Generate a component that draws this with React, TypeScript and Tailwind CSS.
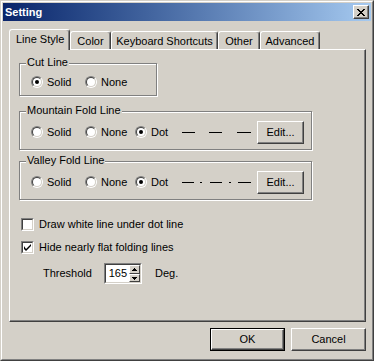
import React from "react";

const Radio = ({ checked }: { checked?: boolean }) => (
  <span className="w-[12px] h-[12px] rounded-full border border-t-[#808080] border-l-[#808080] border-b-white border-r-white shrink-0 flex">
    <span className="flex-1 rounded-full border border-t-[#404040] border-l-[#404040] border-b-[#d4d0c8] border-r-[#d4d0c8] bg-white flex items-center justify-center">
      {checked && <span className="w-[4px] h-[4px] rounded-full bg-black" />}
    </span>
  </span>
);

const RadioOpt = ({ label, checked, w }: { label: string; checked?: boolean; w: string }) => (
  <div className={`flex items-center gap-[4px] ${w}`}>
    <Radio checked={checked} />
    <span>{label}</span>
  </div>
);

const Check = ({ checked }: { checked?: boolean }) => (
  <span className="w-[13px] h-[13px] border border-t-[#808080] border-l-[#808080] border-b-white border-r-white shrink-0 flex">
    <span className="flex-1 border border-t-[#404040] border-l-[#404040] border-b-[#d4d0c8] border-r-[#d4d0c8] bg-white flex items-center justify-center">
      {checked && (
        <svg width="7" height="7" viewBox="0 0 7 7">
          <path d="M0 2 L0 5 L2 7 L7 2 L7 0 L2 5 Z" fill="#000" />
        </svg>
      )}
    </span>
  </span>
);

const Button = ({ label, w, def }: { label: string; w: string; def?: boolean }) =>
  def ? (
    <div className={`${w} h-[23px] border border-black flex`}>
      <div className="flex-1 border border-t-white border-l-white border-b-[#404040] border-r-[#404040] shadow-[inset_-1px_-1px_#808080] flex items-center justify-center">
        {label}
      </div>
    </div>
  ) : (
    <div
      className={`${w} h-[23px] border border-t-white border-l-white border-b-[#404040] border-r-[#404040] shadow-[inset_-1px_-1px_#808080] flex items-center justify-center`}
    >
      {label}
    </div>
  );

const Group = ({
  title,
  cls,
  children,
}: {
  title: string;
  cls: string;
  children: React.ReactNode;
}) => (
  <div
    className={`relative border border-[#808080] shadow-[1px_1px_0_white,inset_1px_1px_0_white] flex items-center pl-[11px] ${cls}`}
  >
    <span className="absolute -top-[8px] left-[6px] bg-[#d4d0c8] px-[1px] leading-[13px]">{title}</span>
    {children}
  </div>
);

const Tab = ({ label, w, active }: { label: string; w: string; active?: boolean }) =>
  active ? (
    <div
      className={`${w} h-[21px] mb-[-1px] relative z-10 bg-[#d4d0c8] border-l border-t border-r border-l-white border-t-white border-r-[#404040] rounded-t-[3px] shadow-[inset_-1px_0_#808080] flex items-center pl-[6px] pb-[1px]`}
    >
      {label}
    </div>
  ) : (
    <div
      className={`${w} h-[18px] bg-[#d4d0c8] border-l border-t border-r border-l-white border-t-white border-r-[#404040] rounded-t-[3px] shadow-[inset_-1px_0_#808080] flex items-center justify-center pt-[1px]`}
    >
      {label}
    </div>
  );

export default function App() {
  return (
    <div className="w-[374px] h-[361px] bg-[#d4d0c8] border border-t-[#d4d0c8] border-l-[#d4d0c8] border-b-[#404040] border-r-[#404040] font-['Liberation_Sans',Arial,sans-serif] text-[11px] leading-[13px] text-black select-none">
      <div className="h-full border border-t-white border-l-white border-b-[#808080] border-r-[#808080] p-[1px] flex flex-col">
        {/* Title bar */}
        <div className="h-[18px] flex items-center bg-linear-to-r from-[#0a246a] to-[#a6caf0] pl-[2px] pr-[2px]">
          <span className="flex-1 font-bold text-white text-[11px]">Setting</span>
          <div className="w-[16px] h-[14px] bg-[#d4d0c8] border border-t-white border-l-white border-b-[#404040] border-r-[#404040] shadow-[inset_-1px_-1px_#808080] flex items-center justify-center">
            <svg width="8" height="7" viewBox="0 0 8 7" shapeRendering="crispEdges">
              <path d="M0 0h2v1h-2z M1 1h2v1h-2z M2 2h1v1h-1z M3 3h2v1h-2z M2 4h1v1h-1z M1 5h2v1h-2z M0 6h2v1h-2z M6 0h2v1h-2z M5 1h2v1h-2z M5 2h1v1h-1z M5 4h1v1h-1z M5 5h2v1h-2z M6 6h2v1h-2z M2 1h1v1h-1z" fill="#000" />
              <path d="M3 2h2v1h-2z M3 4h2v1h-2z" fill="#000" />
            </svg>
          </div>
        </div>

        {/* Content */}
        <div className="flex flex-col pl-[6px] pr-[5px] mt-[8px]">
          {/* Tabs */}
          <div className="flex items-end h-[20px]">
            <Tab label="Line Style" w="w-[61px]" active />
            <Tab label="Color" w="w-[41px]" />
            <Tab label="Keyboard Shortcuts" w="w-[107px]" />
            <Tab label="Other" w="w-[42px]" />
            <Tab label="Advanced" w="w-[60px]" />
          </div>

          {/* Panel */}
          <div className="h-[273px] border border-t-white border-l-white border-b-[#404040] border-r-[#404040] shadow-[inset_-1px_-1px_#808080] flex flex-col pl-[9px]">
            <Group title="Cut Line" cls="mt-[13px] w-[138px] h-[33px] pt-[5px]">
              <RadioOpt label="Solid" checked w="w-[54px]" />
              <RadioOpt label="None" w="w-[50px]" />
            </Group>

            <Group title="Mountain Fold Line" cls="mt-[15px] w-[293px] h-[39px] pt-[3px]">
              <RadioOpt label="Solid" w="w-[54px]" />
              <RadioOpt label="None" w="w-[50px]" />
              <RadioOpt label="Dot" checked w="w-[47px]" />
              <svg width="70" height="1" viewBox="0 0 70 1" shapeRendering="crispEdges">
                <rect x="0" y="0" width="13" height="1" fill="#000" />
                <rect x="27" y="0" width="13" height="1" fill="#000" />
                <rect x="55" y="0" width="14" height="1" fill="#000" />
              </svg>
              <div className="ml-[5px] mt-[1px]">
                <Button label="Edit..." w="w-[47px]" />
              </div>
            </Group>

            <Group title="Valley Fold Line" cls="mt-[11px] w-[293px] h-[39px] pt-[3px]">
              <RadioOpt label="Solid" w="w-[54px]" />
              <RadioOpt label="None" w="w-[50px]" />
              <RadioOpt label="Dot" checked w="w-[47px]" />
              <svg width="70" height="1" viewBox="0 0 70 1" shapeRendering="crispEdges">
                <rect x="0" y="0" width="12" height="1" fill="#000" />
                <rect x="18" y="0" width="2" height="1" fill="#000" />
                <rect x="28" y="0" width="12" height="1" fill="#000" />
                <rect x="47" y="0" width="2" height="1" fill="#000" />
                <rect x="56" y="0" width="13" height="1" fill="#000" />
              </svg>
              <div className="ml-[5px] mt-[1px]">
                <Button label="Edit..." w="w-[47px]" />
              </div>
            </Group>

            <div className="mt-[18px] ml-[2px] h-[13px] flex items-center gap-[5px]">
              <Check />
              <span>Draw white line under dot line</span>
            </div>
            <div className="mt-[10px] ml-[2px] h-[13px] flex items-center gap-[5px]">
              <Check checked />
              <span>Hide nearly flat folding lines</span>
            </div>

            <div className="mt-[9px] ml-[24px] h-[21px] flex items-center">
              <span className="w-[61px]">Threshold</span>
              <div className="w-[38px] h-[21px] border border-t-[#808080] border-l-[#808080] border-b-white border-r-white flex">
                <div className="flex-1 border border-t-[#404040] border-l-[#404040] border-b-[#d4d0c8] border-r-[#d4d0c8] bg-white flex">
                  <div className="flex-1 flex items-center justify-end pr-[2px]">165</div>
                  <div className="w-[11px] flex flex-col">
                    <div className="h-[9px] bg-[#d4d0c8] border border-t-white border-l-white border-b-[#404040] border-r-[#404040] flex items-center justify-center">
                      <svg width="5" height="3" viewBox="0 0 5 3" shapeRendering="crispEdges">
                        <path d="M2 0h1v1h-1z M1 1h3v1h-3z M0 2h5v1h-5z" fill="#000" />
                      </svg>
                    </div>
                    <div className="h-[8px] bg-[#d4d0c8] border border-t-white border-l-white border-b-[#404040] border-r-[#404040] flex items-center justify-center">
                      <svg width="5" height="3" viewBox="0 0 5 3" shapeRendering="crispEdges">
                        <path d="M0 0h5v1h-5z M1 1h3v1h-3z M2 2h1v1h-1z" fill="#000" />
                      </svg>
                    </div>
                  </div>
                </div>
              </div>
              <span className="ml-[13px]">Deg.</span>
            </div>
          </div>

          {/* Buttons */}
          <div className="mt-[6px] flex justify-end gap-[6px]">
            <Button label="OK" w="w-[75px]" def />
            <Button label="Cancel" w="w-[75px]" />
          </div>
        </div>
      </div>
    </div>
  );
}
